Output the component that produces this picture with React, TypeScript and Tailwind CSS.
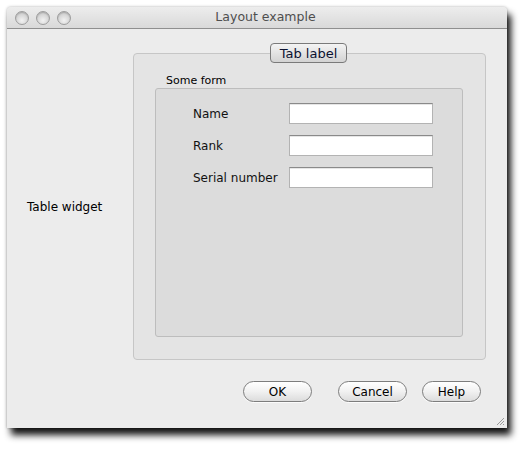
import { ReactNode } from 'react';

const font = { fontFamily: '"DejaVu Sans", "Liberation Sans", sans-serif' };

function TrafficLight() {
  return (
    <div className="w-[14px] h-[14px] rounded-full border border-[#9d9d9d] bg-[radial-gradient(circle_at_50%_70%,#f2f2f2_0%,#d6d6d6_55%,#b9b9b9_100%)] shadow-[inset_0_1px_1px_rgba(0,0,0,0.15)]" />
  );
}

function PillButton({ children, width }: { children: ReactNode; width: string }) {
  return (
    <button
      className={`${width} h-[21px] rounded-full border border-[#7d7d7d] bg-gradient-to-b from-[#ffffff] via-[#f1f1f1] to-[#dcdcdc] text-[12px] text-black leading-none shadow-[0_1px_0_rgba(255,255,255,0.8)]`}>
      {children}
    </button>
  );
}

function FormRow({ label }: { label: string }) {
  return (
    <div className="flex items-center">
      <span className="w-[96px] text-[12px] text-[#111]">{label}</span>
      <div className="w-[144px] h-[21px] bg-white border border-[#b3b3b3] border-t-[#8a8a8a] shadow-[inset_0_1px_0_#e6e6e6]" />
    </div>
  );
}

export default function App() {
  return (
    <div className="w-[530px] h-[452px] bg-white pl-[7px] pt-[7px]" style={font}>
      <div className="w-[500px] h-[421px] bg-[#ececec] rounded-t-[4px] flex flex-col shadow-[4px_7px_7px_rgba(0,0,0,0.92),0_0_3px_rgba(0,0,0,0.3)]">
        {/* title bar */}
        <div className="h-[22px] flex items-center pl-[8px] rounded-t-[4px] bg-gradient-to-b from-[#ededed] to-[#d9d9d9] border-b border-[#8f8f8f] relative">
          <div className="flex gap-[7px]">
            <TrafficLight />
            <TrafficLight />
            <TrafficLight />
          </div>
          <span className="absolute left-[17px] right-0 text-center text-[12.5px] text-[#4e4e4e] pointer-events-none">
            Layout example
          </span>
        </div>

        {/* body */}
        <div className="flex-1 flex flex-col relative">
          <div className="flex pt-[14px]">
            <div className="w-[126px] flex items-center pl-[20px] pt-[10px]">
              <span className="text-[12px] text-black">Table widget</span>
            </div>

            <div className="w-[353px] flex flex-col">
              <div className="flex justify-center -mb-[10px] relative z-10 pr-[2px]">
                <div className="w-[77px] h-[20px] rounded-[4px] border border-[#7a7a7a] bg-gradient-to-b from-[#f4f4f4] to-[#d3d3d3] flex items-center justify-center text-[13px] text-[#0b1230] leading-none">
                  Tab label
                </div>
              </div>
              <div className="h-[307px] rounded-[4px] border border-[#c6c6c6] bg-[#e4e4e4] flex flex-col pt-[21px] pl-[21px] pr-[22px] pb-[22px]">
                <span className="text-[11px] text-black leading-none pl-[11px] mb-[2px]">Some form</span>
                <div className="flex-1 rounded-[3px] border border-[#bdbdbd] bg-[#dcdcdc] flex flex-col gap-[11px] pt-[14px] pl-[37px]">
                  <FormRow label="Name" />
                  <FormRow label="Rank" />
                  <FormRow label="Serial number" />
                </div>
              </div>
            </div>
          </div>

          <div className="flex justify-end pt-[21px] pr-[26px]">
            <PillButton width="w-[69px]">OK</PillButton>
            <div className="w-[26px]" />
            <PillButton width="w-[69px]">Cancel</PillButton>
            <div className="w-[15px]" />
            <PillButton width="w-[59px]">Help</PillButton>
          </div>

          <svg className="absolute right-[2px] bottom-[2px]" width="10" height="10" viewBox="0 0 10 10">
            <path d="M9 2 L2 9 M9 5 L5 9 M9 8 L8 9" stroke="#9a9a9a" strokeWidth="1" />
          </svg>
        </div>
      </div>
    </div>
  );
}
